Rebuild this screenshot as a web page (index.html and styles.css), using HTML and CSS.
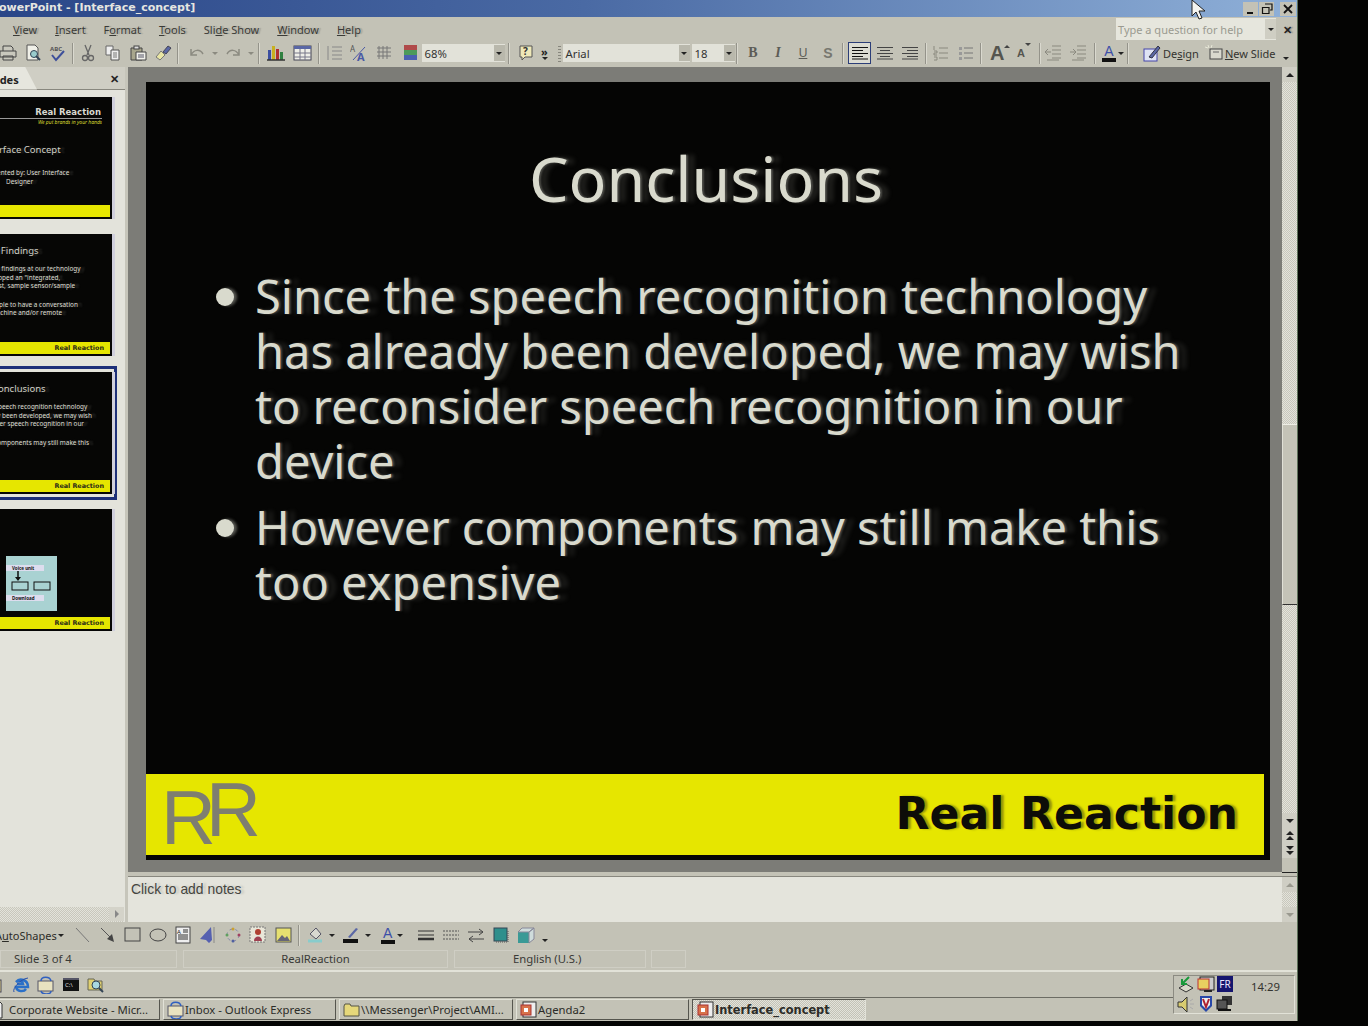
FILE: index.html
```html
<!DOCTYPE html>
<html lang="en">
<head>
    <meta charset="UTF-8">
    <title>PowerPoint - [Interface_concept]</title>
    <link rel="stylesheet" href="styles.css">
</head>
<body>
<div class="app">
    <div class="titlebar">
        <span class="title-text">PowerPoint - [Interface_concept]</span>
        <div class="win-btns">
            <span class="win-btn"><svg width="12" height="12" viewBox="0 0 12 12"><rect x="2" y="9" width="6" height="2" fill="#111"/></svg></span>
            <span class="win-btn"><svg width="12" height="12" viewBox="0 0 12 12"><path d="M4 1h7v6H9M1.500 4.500h6.500v6h-6.500z" fill="none" stroke="#111" stroke-width="1.200"/></svg></span>
            <span class="win-btn win-close"><svg width="12" height="12" viewBox="0 0 12 12"><path d="M2 2l8 8M10 2l-8 8" stroke="#111" stroke-width="1.800"/></svg></span>
        </div>
    </div>

    <div class="menubar">
        <span class="menu-item"><u>V</u>iew</span>
        <span class="menu-item"><u>I</u>nsert</span>
        <span class="menu-item">F<u>o</u>rmat</span>
        <span class="menu-item"><u>T</u>ools</span>
        <span class="menu-item">Sli<u>d</u>e Show</span>
        <span class="menu-item"><u>W</u>indow</span>
        <span class="menu-item"><u>H</u>elp</span>
        <div class="help-box">
            <span class="help-text">Type a question for help</span>
            <span class="help-arrow"></span>
        </div>
        <span class="menu-close">✕</span>
    </div>

    <div class="toolbar">
        <svg class="ico ico-first" width="18" height="18" viewBox="0 0 18 18"><path d="M4 7V2h8l2 2v3M1 7h16v6H1zM4 12h10v4H4z" fill="#c9c8bd" stroke="#444"/></svg>
        <svg class="ico" width="18" height="18" viewBox="0 0 18 18"><path d="M3 1h8l3 3v12H3z" fill="#f0f0e8" stroke="#555"/><circle cx="10" cy="10" r="3.500" fill="#9cc" stroke="#345"/><path d="M12 12l4 4" stroke="#345" stroke-width="2"/></svg>
        <svg class="ico" width="18" height="18" viewBox="0 0 18 18"><text x="1" y="7" class="ico-abc">ABC</text><path d="M3 11l4 5 8-9" fill="none" stroke="#3d4f9a" stroke-width="2"/></svg>
        <span class="sep"></span>
        <svg class="ico" width="18" height="18" viewBox="0 0 18 18"><path d="M6 1l4 10M12 1L8 11" stroke="#666" stroke-width="1.300"/><circle cx="6" cy="14" r="2.500" fill="none" stroke="#666" stroke-width="1.300"/><circle cx="12" cy="14" r="2.500" fill="none" stroke="#666" stroke-width="1.300"/></svg>
        <svg class="ico" width="18" height="18" viewBox="0 0 18 18"><path d="M2 2h7v9H2z" fill="#eee" stroke="#666"/><path d="M7 6h8v10H7z" fill="#eee" stroke="#555"/><path d="M9 9h4M9 11h4M9 13h4" stroke="#777"/></svg>
        <svg class="ico" width="18" height="18" viewBox="0 0 18 18"><path d="M2 4h11v12H2z" fill="#a8a68c" stroke="#444"/><rect x="5" y="2" width="5" height="3" fill="#ddd" stroke="#444"/><path d="M7 8h10v8H7z" fill="#f0f0ea" stroke="#444"/><path d="M9 11h6M9 13h6" stroke="#556"/></svg>
        <svg class="ico" width="18" height="18" viewBox="0 0 18 18"><path d="M2 13l5-6 4 4-5 5z" fill="#e9e6a4" stroke="#777"/><path d="M9 8l5-6 3 2-5 6z" fill="#5a67a5" stroke="#445"/></svg>
        <span class="sep"></span>
        <svg class="ico ico-undo" width="18" height="18" viewBox="0 0 18 18"><path d="M3 5v6h6M3 11c3-6 9-6 12-1" fill="none" stroke="#8b8a80" stroke-width="1.500"/></svg>
        <span class="arrow-sm arrow-wide"></span>
        <svg class="ico" width="18" height="18" viewBox="0 0 18 18"><path d="M15 5v6H9M15 11C12 5 6 5 3 10" fill="none" stroke="#8b8a80" stroke-width="1.500"/></svg>
        <span class="arrow-sm arrow-wide"></span>
        <span class="sep"></span>
        <svg class="ico ico-chart" width="20" height="18" viewBox="0 0 20 18"><rect x="2" y="6" width="3" height="10" fill="#3c4fa0"/><rect x="6" y="2" width="3" height="14" fill="#c8b020"/><rect x="10" y="5" width="3" height="11" fill="#b03030"/><rect x="14" y="8" width="3" height="8" fill="#308040"/><path d="M1 16h18" stroke="#333" stroke-width="1.500"/></svg>
        <svg class="ico" width="20" height="18" viewBox="0 0 20 18"><rect x="1" y="2" width="17" height="14" fill="#efefe8" stroke="#445"/><rect x="1" y="2" width="17" height="3" fill="#5a67a5"/><path d="M7 5v11M12 5v11M1 9h17M1 13h17" stroke="#778"/></svg>
        <span class="sep"></span>
        <svg class="ico" width="18" height="18" viewBox="0 0 18 18"><path d="M7 3h10M7 7h10M7 11h10M7 15h10" stroke="#888"/><path d="M3 2v14" stroke="#888"/></svg>
        <svg class="ico" width="18" height="18" viewBox="0 0 18 18"><text x="0" y="8" class="ico-a-sm">A</text><text x="7" y="17" class="ico-a-lg">A</text><path d="M3 16L15 3" stroke="#4a5aa5"/></svg>
        <svg class="ico" width="18" height="18" viewBox="0 0 18 18"><path d="M2 4h14M2 8h14M2 12h14M4 2v13M8 2v13M12 2v13" stroke="#777"/></svg>
        <svg class="ico ico-gray" width="16" height="18" viewBox="0 0 16 18"><rect x="1" y="1" width="13" height="5" fill="#b04a4a"/><rect x="1" y="6" width="13" height="5" fill="#4c9a5a"/><rect x="1" y="11" width="13" height="5" fill="#4a5fb0"/></svg>
        <div class="combo combo-zoom"><span class="combo-val">68%</span><span class="combo-btn"></span></div>
        <span class="sep sep-wide"></span>
        <svg class="ico" width="18" height="18" viewBox="0 0 18 18"><path d="M3 2h12v11H8l-3 3v-3H3z" fill="#eee8b8" stroke="#555"/><text x="6" y="11" class="ico-q">?</text></svg>
        <span class="more"><span class="more-top">»</span><span class="arrow-sm arrow-dark"></span></span>
        <span class="grip"></span>
        <div class="combo combo-font"><span class="combo-val">Arial</span><span class="combo-btn"></span></div>
        <div class="combo combo-size"><span class="combo-val">18</span><span class="combo-btn"></span></div>
        <span class="sep"></span>
        <span class="fmt fmt-b">B</span>
        <span class="fmt fmt-i">I</span>
        <span class="fmt fmt-u">U</span>
        <span class="fmt fmt-s">S</span>
        <span class="sep sep-align"></span>
        <span class="align-btn align-on"><svg width="18" height="14" viewBox="0 0 18 14"><path d="M1 1.500h16M1 4.500h11M1 7.500h16M1 10.500h11M1 13h16" stroke="#111"/></svg></span>
        <span class="align-btn"><svg width="18" height="14" viewBox="0 0 18 14"><path d="M1 1.500h16M4 4.500h10M1 7.500h16M4 10.500h10M1 13h16" stroke="#444"/></svg></span>
        <span class="align-btn"><svg width="18" height="14" viewBox="0 0 18 14"><path d="M1 1.500h16M6 4.500h11M1 7.500h16M6 10.500h11M1 13h16" stroke="#444"/></svg></span>
        <span class="sep"></span>
        <svg class="ico" width="18" height="18" viewBox="0 0 18 18"><path d="M7 4h9M7 9h9M7 14h9M2 2v4M2 7h3v2H2v2h3M2 13h3v3H2" fill="none" stroke="#8a897f"/></svg>
        <svg class="ico" width="18" height="18" viewBox="0 0 18 18"><path d="M7 4h9M7 9h9M7 14h9" stroke="#777"/><path d="M2 3h3v3H2zM2 8h3v3H2zM2 13h3v3H2z" fill="#999"/></svg>
        <span class="sep"></span>
        <span class="big-a"><span class="big-a-l">A</span><span class="tri-up"></span></span>
        <span class="big-a big-a-small"><span class="big-a-s">A</span><span class="tri-down"></span></span>
        <span class="sep sep-indent"></span>
        <svg class="ico" width="18" height="18" viewBox="0 0 18 18"><path d="M8 2h9M8 6h9M8 10h9M8 14h9M1 8h6M4 5L1 8l3 3M3 16h12" fill="none" stroke="#8a897f"/></svg>
        <svg class="ico" width="18" height="18" viewBox="0 0 18 18"><path d="M8 2h9M8 6h9M8 10h9M8 14h9M1 8h6M4 5l3 3-3 3M3 16h12" fill="none" stroke="#8a897f"/></svg>
        <span class="sep sep-color"></span>
        <span class="font-color"><span class="fc-a">A</span><span class="fc-bar"></span></span>
        <span class="arrow-sm arrow-dark"></span>
        <span class="sep"></span>
        <svg class="ico ico-design" width="18" height="18" viewBox="0 0 18 18"><rect x="1" y="5" width="13" height="12" fill="#dfe3f4" stroke="#44a"/><path d="M6 13L15 2l2 2-8 10z" fill="#5a67a5" stroke="#334"/></svg>
        <span class="tb-label">De<u>s</u>ign</span>
        <svg class="ico ico-new" width="18" height="18" viewBox="0 0 18 18"><path d="M3 1l1 3M0 3l3 1M7 1L6 4" stroke="#e8e8d8"/><rect x="5" y="5" width="12" height="10" fill="#d9d8ce" stroke="#444"/><path d="M8 8h6" stroke="#666"/></svg>
        <span class="tb-label"><u>N</u>ew Slide</span>
        <span class="arrow-sm arrow-dark arrow-end"></span>
    </div>

    <div class="workspace">
        <aside class="slides-panel">
            <div class="panel-tabs">
                <span class="panel-tab">Slides</span>
                <span class="panel-close">✕</span>
            </div>
            <div class="thumbs">
                <div class="thumb thumb-one">
                    <div class="t1-brand">Real Reaction</div>
                    <div class="t1-sub">We put brands in your hands</div>
                    <div class="t-title t1-title">Interface Concept</div>
                    <div class="t-line t1-by">Presented by: User Interface</div>
                    <div class="t-line t1-by2">Designer</div>
                    <div class="t-foot"></div>
                </div>
                <div class="thumb">
                    <div class="t-title t2-title">Interface Findings</div>
                    <div class="t-body t2-body">
                        <div class="t-line">Looking at our findings at our technology</div>
                        <div class="t-line">we have developed an "integrated,</div>
                        <div class="t-line">simple, low-cost, sample sensor/sample</div>
                        <div class="t-line t-gap">we expect people to have a conversation</div>
                        <div class="t-line">with coffee machine and/or remote</div>
                    </div>
                    <div class="t-foot">Real Reaction</div>
                </div>
                <div class="thumb-frame">
                    <div class="thumb">
                        <div class="t-title t3-title">Conclusions</div>
                        <div class="t-body t3-body">
                            <div class="t-line">Since the speech recognition technology</div>
                            <div class="t-line">has already been developed, we may wish</div>
                            <div class="t-line">to reconsider speech recognition in our</div>
                            <div class="t-line t-gap">However components may still make this</div>
                        </div>
                        <div class="t-foot">Real Reaction</div>
                    </div>
                </div>
                <div class="thumb">
                    <div class="t4-diagram">
                        <span class="t4-label">Voice unit</span>
                        <svg class="t4-svg" width="52" height="22" viewBox="0 0 52 22"><path d="M12 0v8" stroke="#111" stroke-width="1.500"/><path d="M9 6h6l-3 4z" fill="#111"/><rect x="6" y="11" width="16" height="8" fill="none" stroke="#111"/><rect x="28" y="11" width="16" height="8" fill="none" stroke="#111"/></svg>
                        <span class="t4-label t4-label-low">Download</span>
                    </div>
                    <div class="t-foot">Real Reaction</div>
                </div>
            </div>
            <div class="panel-scroll"><span class="panel-scroll-btn"></span></div>
        </aside>

        <div class="center">
            <div class="stage">
                <div class="slide">
                    <h1 class="slide-title">Conclusions</h1>
                    <ul class="slide-list">
                        <li>Since the speech recognition technology has already been developed, we may wish to reconsider speech recognition in our device</li>
                        <li>However components may still make this too expensive</li>
                    </ul>
                    <div class="slide-foot">
                        <span class="logo"><span class="logo-r1">R</span><span class="logo-r2">R</span></span>
                        <span class="brand">Real Reaction</span>
                    </div>
                </div>
            </div>
            <div class="notes">Click to add notes</div>
        </div>

        <div class="vscroll">
            <div class="vs-main">
                <span class="vs-btn"><span class="tri-up-sb"></span></span>
                <span class="vs-track"></span>
                <span class="vs-thumb"></span>
                <span class="vs-track vs-track-low"></span>
                <span class="vs-btn"><span class="tri-dn-sb"></span></span>
                <span class="vs-page"><span class="tri-up-sb"></span><span class="tri-up-sb"></span></span>
                <span class="vs-page"><span class="tri-dn-sb"></span><span class="tri-dn-sb"></span></span>
            </div>
            <div class="vs-notes">
                <span class="vs-btn"><span class="tri-up-sb tri-gray"></span></span>
                <span class="vs-track"></span>
                <span class="vs-btn"><span class="tri-dn-sb tri-gray"></span></span>
            </div>
        </div>
    </div>

    <div class="drawbar">
        <span class="autoshapes">A<u>u</u>toShapes</span>
        <span class="arrow-sm arrow-dark"></span>
        <svg class="ico dr-first" width="18" height="18" viewBox="0 0 18 18"><path d="M2 2l13 14" stroke="#777"/></svg>
        <svg class="ico" width="18" height="18" viewBox="0 0 18 18"><path d="M2 2l11 11" stroke="#555"/><path d="M15 16l-7-3 5-5z" fill="#444"/></svg>
        <svg class="ico" width="18" height="18" viewBox="0 0 18 18"><rect x="1" y="2" width="15" height="13" fill="none" stroke="#444"/></svg>
        <svg class="ico" width="18" height="18" viewBox="0 0 18 18"><ellipse cx="9" cy="9" rx="8" ry="6" fill="none" stroke="#444"/></svg>
        <svg class="ico" width="18" height="18" viewBox="0 0 18 18"><rect x="2" y="1" width="14" height="16" fill="#eee" stroke="#444"/><path d="M9 4h5M9 6h5M4 9h10M4 11h10M4 13h10" stroke="#333"/><text x="3" y="8" class="ico-a-xs">A</text></svg>
        <svg class="ico" width="18" height="18" viewBox="0 0 18 18"><path d="M12 1L1 13l6 1 3 3 3-3z" fill="#5560b0"/><path d="M15 1v16" stroke="#888"/></svg>
        <svg class="ico" width="18" height="18" viewBox="0 0 18 18"><circle cx="9" cy="9" r="6" fill="none" stroke="#8888a8" stroke-dasharray="3 3"/><circle cx="9" cy="3" r="1.500" fill="#c9a030"/><circle cx="15" cy="9" r="1.500" fill="#a04060"/><circle cx="9" cy="15" r="1.500" fill="#5060a0"/><circle cx="3" cy="9" r="1.500" fill="#60a060"/></svg>
        <svg class="ico" width="18" height="18" viewBox="0 0 18 18"><rect x="1" y="1" width="15" height="15" fill="#e8e6d8" stroke="#777" stroke-dasharray="2 1"/><circle cx="9" cy="6" r="3" fill="#b04030"/><path d="M5 15c0-6 8-6 8 0z" fill="#a04050"/></svg>
        <svg class="ico ico-pic" width="18" height="18" viewBox="0 0 18 18"><rect x="1" y="2" width="15" height="14" fill="#e6e070" stroke="#555"/><path d="M2 15l5-6 3 3 2-2 3 5z" fill="#667"/></svg>
        <span class="sep"></span>
        <svg class="ico ico-fill" width="18" height="18" viewBox="0 0 18 18"><path d="M3 8l6-6 5 6-5 5z" fill="#d8d8d0" stroke="#556"/><path d="M1 15h14" stroke="#8cc" stroke-width="3"/></svg>
        <span class="arrow-sm arrow-dark"></span>
        <svg class="ico ico-line" width="18" height="18" viewBox="0 0 18 18"><path d="M6 11L14 2l2 1-8 9z" fill="#5a67a5"/><rect x="1" y="13" width="15" height="4" fill="#111"/></svg>
        <span class="arrow-sm arrow-dark"></span>
        <span class="font-color fc-draw"><span class="fc-a">A</span><span class="fc-bar"></span></span>
        <span class="arrow-sm arrow-dark"></span>
        <svg class="ico ico-weight" width="18" height="18" viewBox="0 0 18 18"><path d="M1 5h16M1 9h16" stroke="#333"/><path d="M1 13h16" stroke="#333" stroke-width="2.500"/></svg>
        <svg class="ico" width="18" height="18" viewBox="0 0 18 18"><path d="M1 5h16M1 9h16M1 13h16" stroke="#555" stroke-dasharray="2 1"/></svg>
        <svg class="ico" width="18" height="18" viewBox="0 0 18 18"><path d="M1 6h15M12 3l4 3-4 3M17 13H2M6 10l-4 3 4 3" fill="none" stroke="#444"/></svg>
        <svg class="ico" width="18" height="18" viewBox="0 0 18 18"><rect x="2" y="2" width="13" height="13" fill="#2f8f8c" stroke="#345"/><path d="M4 16h12V4" fill="none" stroke="#555" stroke-dasharray="1 1"/></svg>
        <svg class="ico" width="18" height="18" viewBox="0 0 18 18"><path d="M1 6h11v11H1z" fill="#3a9a96"/><path d="M1 6l4-4h12l-5 4zM12 6l5-4v11l-5 4z" fill="#cfdcdc" stroke="#889"/></svg>
        <span class="arrow-sm arrow-dark arrow-end-draw"></span>
    </div>

    <div class="statusbar">
        <span class="st-cell st-slide">Slide 3 of 4</span>
        <span class="st-cell st-design">RealReaction</span>
        <span class="st-cell st-lang">English (U.S.)</span>
        <span class="st-cell st-b"></span>
    </div>

    <div class="taskbar">
        <div class="task-main">
            <div class="quicklaunch">
                <svg class="ico ql-first" width="18" height="18" viewBox="0 0 18 18"><rect x="2" y="4" width="12" height="12" fill="#e8d890" stroke="#445"/></svg>
                <svg class="ico" width="18" height="18" viewBox="0 0 18 18"><path d="M14 13c-2 3-9 3-10-2h12C16 4 8 1 4 6c2-2 6-2 7 2H5" fill="none" stroke="#2a70c8" stroke-width="2.500"/><path d="M2 16C0 13 8 3 16 2" fill="none" stroke="#2a50a8"/></svg>
                <svg class="ico" width="18" height="18" viewBox="0 0 18 18"><rect x="1" y="5" width="15" height="10" fill="#e8e2c0" stroke="#556"/><path d="M4 5c0-5 9-5 10 0M14 15c0 4-9 4-10 0" fill="none" stroke="#3060c0" stroke-width="1.500"/></svg>
                <svg class="ico" width="18" height="18" viewBox="0 0 18 18"><rect x="1" y="2" width="16" height="13" fill="#111"/><rect x="1" y="2" width="16" height="2" fill="#556"/><text x="3" y="11" class="ico-cmd">C:\</text></svg>
                <svg class="ico" width="18" height="18" viewBox="0 0 18 18"><path d="M1 3h6l1 2h7v9H1z" fill="#e0d070" stroke="#665"/><circle cx="9" cy="9" r="4" fill="#a8d8e0" stroke="#345"/><path d="M12 12l4 4" stroke="#345" stroke-width="2"/></svg>
            </div>
            <div class="tasks">
                <span class="task task-web"><svg class="task-ico" width="14" height="18" viewBox="0 0 14 18"><path d="M-6 1h12l2 2v14h-14z" fill="#eee" stroke="#333"/></svg>Corporate Website - Micr...</span>
                <span class="task task-mail"><svg class="task-ico" width="17" height="18" viewBox="0 0 17 18"><rect x="1" y="5" width="15" height="10" fill="#e8e2c0" stroke="#556"/><path d="M4 5c0-5 9-5 10 0M14 15c0 4-9 4-10 0" fill="none" stroke="#3060c0" stroke-width="1.500"/></svg>Inbox - Outlook Express</span>
                <span class="task task-folder"><svg class="task-ico" width="17" height="18" viewBox="0 0 17 18"><path d="M1 5l1-2h5l1 2h8v10H1z" fill="#e6d87a" stroke="#554"/></svg>\\Messenger\Project\AMI...</span>
                <span class="task task-agenda"><svg class="task-ico" width="17" height="18" viewBox="0 0 17 18"><rect x="3" y="1" width="13" height="15" fill="#eee" stroke="#333"/><rect x="1" y="4" width="10" height="10" fill="#d8724a" stroke="#a33"/><rect x="4" y="7" width="4" height="4" fill="#fff"/></svg>Agenda2</span>
                <span class="task task-active"><svg class="task-ico" width="17" height="18" viewBox="0 0 17 18"><rect x="3" y="1" width="13" height="15" fill="#eee" stroke="#333"/><rect x="1" y="4" width="10" height="10" fill="#d8724a" stroke="#a33"/><rect x="4" y="7" width="4" height="4" fill="#fff"/></svg>Interface_concept</span>
            </div>
        </div>
        <div class="tray">
            <div class="tray-icons">
                <svg width="18" height="18" viewBox="0 0 18 18"><path d="M2 12l7-4 7 4-7 4z" fill="#d8d8c8" stroke="#333"/><path d="M12 1L5 8M5 3v5h5" fill="none" stroke="#1a9a3a" stroke-width="2"/></svg>
                <svg width="18" height="18" viewBox="0 0 18 18"><rect x="3" y="1" width="14" height="13" fill="#ccc" stroke="#222"/><rect x="1" y="3" width="11" height="10" fill="#e8d060" stroke="#b33"/><path d="M7 15h8" stroke="#222" stroke-width="2"/></svg>
                <span class="lang">FR</span>
                <svg width="18" height="18" viewBox="0 0 18 18"><path d="M1 7h4l5-5v15l-5-5H1z" fill="#d8cc70" stroke="#333"/><path d="M13 6l3-2M13 9h4M13 12l3 2" stroke="#aaa"/></svg>
                <svg width="18" height="18" viewBox="0 0 18 18"><path d="M3 1h12v10l-6 6-6-6z" fill="#2848a8"/><path d="M5 3h8v7l-4 4-4-4z" fill="#eee"/><path d="M6 4l3 8 3-8" fill="none" stroke="#b02030" stroke-width="2"/></svg>
                <svg width="18" height="18" viewBox="0 0 18 18"><rect x="6" y="1" width="10" height="9" fill="#333"/><rect x="1" y="5" width="10" height="9" fill="#555" stroke="#111"/><path d="M2 15h13" stroke="#111" stroke-width="2"/></svg>
            </div>
            <span class="clock">14:29</span>
        </div>
    </div>
</div>
<svg class="cursor" width="18" height="22" viewBox="0 0 18 22"><path d="M1 0v16l4-4 3 7 3-1-3-7h6z" fill="#f4f4f0" stroke="#222"/></svg>
</body>
</html>
```

FILE: styles.css
```css
* {
    box-sizing: border-box;
}

html, body {
    margin: 0;
    padding: 0;
    background: #040403;
}

body {
    position: relative;
    width: 1368px;
    height: 1026px;
    overflow: hidden;
    font-family: "Noto Sans", "Liberation Sans", sans-serif;
    font-size: 11.300px;
    color: #2c2c28;
}

.app {
    width: 1298px;
    height: 1021px;
    background: #c3c2b6;
    display: flex;
    flex-direction: column;
    overflow: hidden;
    border-right: 1px solid #5c7058;
}

.cursor {
    position: absolute;
    left: 1191px;
    top: 0;
}

/* title bar */
.titlebar {
    height: 17px;
    flex: none;
    display: flex;
    align-items: center;
    justify-content: space-between;
    background: linear-gradient(90deg, #2a4688 0%, #4a6aa4 45%, #8fb0d8 100%);
}

.title-text {
    margin: -3px 0 0 -9px;
    color: #e6e6e0;
    font-family: "DejaVu Sans", sans-serif;
    font-weight: 700;
    font-size: 11px;
}

.win-btns {
    display: flex;
    gap: 1px;
    margin-right: 1px;
}

.win-btn {
    width: 15px;
    height: 14px;
    background: #c3c2b6;
    display: flex;
    align-items: center;
    justify-content: center;
}

.win-close {
    margin-left: 5px;
    width: 16px;
}

/* menu */
.menubar {
    height: 26px;
    flex: none;
    display: flex;
    align-items: center;
    padding: 0 5px 2px 13px;
    gap: 18px;
    font-size: 11px;
    color: #3a3a36;
    text-shadow: 2px 0 1px rgba(60, 60, 55, .25);
}

.help-box {
    margin: 0 -8px 0 auto;
    width: 160px;
    height: 22px;
    background: #e6e6dd;
    color: #9a9a90;
    display: flex;
    align-items: center;
    justify-content: space-between;
    padding-left: 2px;
    text-shadow: none;
}

.help-arrow {
    width: 11px;
    height: 20px;
    background: #cfcec3;
    position: relative;
}

.help-arrow::after,
.combo-btn::after {
    content: "";
    position: absolute;
    left: 50%;
    top: 50%;
    margin: -1px 0 0 -3px;
    border: 3px solid transparent;
    border-top: 3px solid #222;
    border-bottom: 0;
}

.menu-close {
    margin-left: -3px;
    font-size: 11px;
    font-weight: 700;
    color: #222;
}

/* toolbar */
.toolbar {
    height: 24px;
    flex: none;
    display: flex;
    align-items: center;
    padding-right: 3px;
    overflow: hidden;
    margin-top: -2px;
    margin-bottom: 2px;
}

.ico {
    flex: none;
    margin: 0 3.500px;
}

.ico-first {
    margin-left: -1px;
}

.ico-undo {
    margin-left: 7px;
}

.ico-chart {
    margin-left: 5px;
}

.ico-gray {
    margin-left: 6px;
    margin-right: 3px;
}

.ico-abc {
    font-size: 6px;
    font-weight: 700;
    fill: #555;
}

.ico-a-sm {
    font-size: 8px;
    fill: #555;
}

.ico-a-lg {
    font-size: 11px;
    font-weight: 700;
    fill: #4a5aa5;
}

.ico-a-xs {
    font-size: 6px;
    fill: #222;
}

.ico-q {
    font-size: 10px;
    font-weight: 700;
    fill: #333;
}

.ico-cmd {
    font-size: 6px;
    fill: #ddd;
}

.sep {
    flex: none;
    width: 1px;
    height: 21px;
    background: #94938a;
    border-right: 1px solid #dad9cf;
    margin: 0 1.500px;
    box-sizing: content-box;
}

.sep-wide {
    margin: 0 3.500px;
}

.sep-align {
    margin-right: 4px;
}

.sep-indent {
    margin-right: 0;
}

.sep-color {
    margin-left: 3px;
}

.arrow-sm {
    flex: none;
    width: 0;
    height: 0;
    border: 3px solid transparent;
    border-top: 3px solid #8b8a80;
    border-bottom: 0;
    margin: 0 1px;
}

.arrow-wide {
    margin: 0 2.500px;
}

.arrow-dark {
    border-top-color: #222;
}

.arrow-end {
    margin-left: 8px;
    margin-top: 10px;
}

.combo {
    flex: none;
    height: 18px;
    background: #e2e2d9;
    display: flex;
    align-items: center;
    justify-content: space-between;
    padding-left: 3px;
    color: #333;
}

.combo-btn {
    width: 11px;
    height: 16px;
    background: #b9b8ac;
    position: relative;
}

.combo-zoom {
    width: 83px;
}

.combo-font {
    width: 127px;
}

.combo-size {
    width: 43px;
    margin-left: 2px;
}

.more {
    flex: none;
    width: 12px;
    display: flex;
    flex-direction: column;
    align-items: center;
    line-height: 9px;
    font-size: 11px;
    font-weight: 700;
    color: #222;
}

.more-top {
    height: 10px;
}

.grip {
    flex: none;
    width: 3px;
    height: 18px;
    margin: 0 2px 0 7px;
    background: repeating-linear-gradient(0deg, #87867d 0 1px, transparent 1px 3px);
}

.fmt {
    flex: none;
    width: 25px;
    text-align: center;
    font-family: "Liberation Serif", serif;
    font-size: 14px;
    font-weight: 700;
    color: #5c5c56;
}

.fmt-b {
    margin-left: 1px;
}

.fmt-i {
    font-style: italic;
}

.fmt-u {
    font-family: "Liberation Sans", sans-serif;
    font-size: 12px;
    text-decoration: underline;
    font-weight: 400;
}

.fmt-s {
    font-family: "Liberation Sans", sans-serif;
    color: #77776f;
}

.align-btn {
    flex: none;
    width: 23px;
    height: 22px;
    display: flex;
    align-items: center;
    justify-content: center;
    margin-right: 2px;
}

.align-on {
    background: #dcdcd3;
    border: 1px solid #2c3e78;
}

.big-a {
    flex: none;
    width: 25px;
    margin-left: 7px;
    display: flex;
    align-items: flex-start;
    color: #55554f;
    font-family: "Liberation Sans", sans-serif;
    font-weight: 700;
    line-height: 20px;
}

.big-a-l {
    font-size: 20px;
}

.big-a-s {
    font-size: 11px;
    line-height: 24px;
}

.big-a-small {
    width: 20px;
    margin-left: 2px;
}

.tri-up,
.tri-down {
    width: 0;
    height: 0;
    border: 3px solid transparent;
    margin-top: 2px;
}

.tri-up {
    border-top: 0;
    border-bottom: 3px solid #444;
}

.tri-down {
    border-bottom: 0;
    border-top: 3px solid #444;
}

.font-color {
    flex: none;
    width: 16px;
    margin-left: 4px;
    display: flex;
    flex-direction: column;
    align-items: center;
}

.fc-a {
    font-family: "Liberation Sans", sans-serif;
    font-size: 14px;
    line-height: 13px;
    color: #3c4fa8;
}

.fc-bar {
    width: 14px;
    height: 4px;
    background: #111;
}

.tb-label {
    flex: none;
    font-size: 11px;
    color: #33332f;
}

.ico-design {
    margin-left: 13px;
    margin-right: 2px;
}

.ico-new {
    margin-left: 6px;
    margin-right: 2px;
}

/* workspace */
.workspace {
    height: 855px;
    flex: none;
    display: flex;
}

.slides-panel {
    width: 128px;
    flex: none;
    background: #e3e3db;
    display: flex;
    flex-direction: column;
    border-right: 3px solid #c6c5ba;
    overflow: hidden;
}

.panel-tabs {
    height: 23px;
    flex: none;
    background: #cfcec4;
    display: flex;
    align-items: center;
    justify-content: space-between;
    padding-right: 6px;
    border-bottom: 1px solid #88877e;
}

.panel-tab {
    margin-left: -13px;
    height: 23px;
    width: 50px;
    padding: 5px 0 0 0;
    background: #e6e6de;
    font-weight: 700;
    font-size: 11px;
    color: #222;
    clip-path: polygon(0 0, 38px 0, 100% 100%, 0 100%);
}

.panel-close {
    font-size: 11px;
    font-weight: 700;
    color: #222;
}

.thumbs {
    flex: 1;
    padding-top: 7px;
    display: flex;
    flex-direction: column;
    align-items: flex-end;
    padding-right: 13px;
    overflow: hidden;
}

.thumb {
    width: 168px;
    height: 122px;
    flex: none;
    background: #060605;
    border-right: 2px solid #060605;
    box-shadow: 3px 0 0 #d0cfdc;
    color: #ddddd2;
    display: flex;
    flex-direction: column;
    margin-bottom: 15px;
    position: relative;
    overflow: hidden;
    font-size: 6.400px;
}

.thumb-frame {
    flex: none;
    border: 3px solid #1d2f78;
    padding: 3px 2px;
    background: #e3e3db;
    margin: -5px -5px 9px 0;
}

.thumb-frame .thumb {
    margin: 0;
}

.t1-brand {
    text-align: right;
    padding: 10px 9px 0 0;
    font-family: "DejaVu Sans", sans-serif;
    font-weight: 700;
    font-size: 8.500px;
    color: #d8d8d0;
}

.t1-sub {
    border-top: 1px solid #999;
    margin: 1px 8px 0 0;
    text-align: right;
    font-size: 5px;
    font-style: italic;
    color: #d8d830;
}

.t-title {
    font-size: 9.500px;
    padding: 10px 0 0 57px;
    color: #cfcfc5;
    white-space: nowrap;
    text-shadow: 4px 0 2px rgba(200, 200, 190, .2);
}

.t1-title {
    padding: 18px 0 0 37px;
}

.t2-title {
    padding-left: 14px;
}

.t3-title {
    padding-left: 48px;
}

.t-body {
    padding: 8px 0 0 18px;
    text-align: left;
}

.t2-body {
    padding-left: 12px;
}

.t3-body {
    padding-left: 22px;
}

.t-line {
    white-space: nowrap;
    line-height: 8.500px;
    text-shadow: 4px 0 2px rgba(200, 200, 190, .25);
}

.t-gap {
    margin-top: 10px;
}

.t1-by {
    padding: 13px 0 0 40px;
}

.t1-by2 {
    padding-left: 62px;
}

.t-foot {
    margin-top: auto;
    margin-bottom: 2px;
    height: 12px;
    background: #e6e600;
    color: #2a2a18;
    text-align: right;
    padding-right: 6px;
    font-family: "DejaVu Sans", sans-serif;
    font-weight: 700;
    font-size: 6.400px;
    line-height: 12px;
    white-space: nowrap;
}

.t4-diagram {
    margin: 47px 0 0 62px;
    width: 51px;
    height: 55px;
    background: #a9d2d2;
    color: #111;
    font-size: 4.500px;
    font-weight: 700;
    padding-top: 9px;
    display: flex;
    flex-direction: column;
}

.t4-label {
    padding-left: 6px;
    line-height: 6px;
    background: #dde;
    width: 38px;
}

.t4-label-low {
    margin-top: 2px;
}

.t4-svg {
    flex: none;
}

.panel-scroll {
    height: 15px;
    flex: none;
    margin-right: 2px;
    background: repeating-conic-gradient(#e3e3db 0 25%, #c8c7bc 0 50%) 0 0 / 2px 2px;
    display: flex;
    justify-content: flex-end;
}

.panel-scroll-btn {
    width: 15px;
    height: 14px;
    background: #d4d3c9;
    position: relative;
    margin-right: -1px;
}

.panel-scroll-btn::after {
    content: "";
    position: absolute;
    left: 6px;
    top: 3px;
    border: 4px solid transparent;
    border-left: 4px solid #888;
    border-right: 0;
}

/* slide */
.center {
    flex: 1;
    min-width: 0;
    display: flex;
    flex-direction: column;
}

.stage {
    height: 809px;
    flex: none;
    background: #7c7c77;
    padding: 15px 0 0 18px;
    border-bottom: 3px solid #c3c2b6;
    box-shadow: inset 0 -1px 0 #c3c2b6;
}

.slide {
    width: 1124px;
    height: 778px;
    background: #050504;
    display: flex;
    flex-direction: column;
    color: #d9dacd;
    font-family: "Noto Sans", "Liberation Sans", sans-serif;
}

.slide-title {
    margin: 60px 0 0;
    text-align: center;
    font-weight: 400;
    font-size: 62.700px;
    line-height: 72px;
    padding-right: 4px;
    text-shadow: 2px 0 2px rgba(170, 170, 160, .4), 8px 0 5px rgba(170, 170, 160, .18);
}

.slide-list {
    list-style: none;
    margin: 55px 0 0;
    padding: 0 60px 0 109px;
    font-size: 47px;
    line-height: 55px;
    text-shadow: 2px 0 2px rgba(170, 170, 160, .4), 9px 0 5px rgba(170, 170, 160, .16);
}

.slide-list li {
    position: relative;
    margin-bottom: 11px;
}

.slide-list li::before {
    content: "";
    position: absolute;
    left: -39px;
    top: 19px;
    width: 18px;
    height: 18px;
    border-radius: 50%;
    background: #d9dacd;
    box-shadow: 3px 0 3px rgba(170, 170, 160, .5);
}

.slide-foot {
    margin-top: auto;
    margin-bottom: 5px;
    margin-right: 6px;
    height: 81px;
    background: #e6e600;
    display: flex;
    align-items: center;
    justify-content: space-between;
    padding: 0 26px 0 15px;
}

.logo {
    display: flex;
    color: #7e7e70;
    font-family: "Liberation Sans", sans-serif;
    font-size: 76px;
    line-height: 76px;
    align-items: flex-start;
}

.logo-r1 {
    margin-top: 7px;
}

.logo-r2 {
    margin-left: -10px;
    margin-top: -1px;
}

.brand {
    margin-top: -2px;
    color: #0d0d08;
    font-family: "DejaVu Sans", sans-serif;
    font-weight: 700;
    font-size: 44.200px;
    text-shadow: 3px 0 2px rgba(70, 70, 20, .5);
}

.notes {
    flex: 1;
    background: #e4e4dc;
    padding: 4px 0 0 3px;
    font-size: 13.900px;
    color: #45453f;
    border-top: 1px solid #88877e;
    font-family: "Liberation Sans", sans-serif;
    text-shadow: 3px 0 2px rgba(80, 80, 70, .2);
}

/* right scrollbar */
.vscroll {
    width: 15px;
    flex: none;
    display: flex;
    flex-direction: column;
    background: #c3c2b6;
}

.vs-main {
    height: 806px;
    flex: none;
    display: flex;
    flex-direction: column;
    border-bottom: 1px solid #222;
}

.vs-notes {
    flex: 1;
    display: flex;
    flex-direction: column;
    margin-top: 3px;
    border-top: 1px solid #88877e;
    background: #d4d3c9;
}

.vs-btn {
    height: 15px;
    flex: none;
    background: #cfcec4;
    display: flex;
    align-items: center;
    justify-content: center;
}

.vs-track {
    height: 342px;
    flex: none;
    background: repeating-conic-gradient(#e3e3db 0 25%, #c8c7bc 0 50%) 0 0 / 2px 2px;
}

.vs-track-low {
    height: 208px;
}

.vs-notes .vs-track {
    flex: 1;
    height: auto;
}

.vs-thumb {
    height: 181px;
    flex: none;
    background: #c4c3b7;
    border-top: 1px solid #eeeee6;
    border-left: 1px solid #e0e0d6;
    border-bottom: 1px solid #333;
}

.vs-page {
    height: 15px;
    flex: none;
    background: #cfcec4;
    display: flex;
    flex-direction: column;
    align-items: center;
    justify-content: center;
    gap: 1px;
}

.tri-up-sb,
.tri-dn-sb {
    width: 0;
    height: 0;
    border: 4px solid transparent;
}

.tri-up-sb {
    border-top: 0;
    border-bottom: 4px solid #222;
}

.tri-dn-sb {
    border-bottom: 0;
    border-top: 4px solid #222;
}

.tri-gray.tri-up-sb {
    border-bottom-color: #9a998f;
}

.tri-gray.tri-dn-sb {
    border-top-color: #9a998f;
}

/* bottom bars */
.drawbar {
    height: 26px;
    flex: none;
    display: flex;
    align-items: center;
}

.autoshapes {
    margin-left: -5px;
    flex: none;
    font-size: 11px;
}

.dr-first {
    margin-left: 9px;
}

.ico-pic {
    margin-left: 5px;
}

.ico-fill {
    margin-left: 5px;
}

.ico-line {
    margin-left: 6px;
}

.fc-draw {
    margin-left: 8px;
}

.ico-weight {
    margin-left: 13px;
}

.arrow-end-draw {
    margin-left: 4px;
    margin-top: 10px;
}

.statusbar {
    height: 24px;
    flex: none;
    display: flex;
    align-items: center;
    border-bottom: 2px solid #e2e2d8;
    padding-bottom: 1px;
}

.st-cell {
    flex: none;
    height: 18px;
    border: 1px solid #cfcec4;
    line-height: 15px;
    color: #3a3a36;
    margin-right: 6px;
}

.st-slide {
    width: 177px;
    padding-left: 13px;
}

.st-design {
    width: 265px;
    text-align: center;
}

.st-lang {
    width: 192px;
    padding-left: 58px;
    margin-right: 5px;
}

.st-b {
    width: 35px;
}

.taskbar {
    flex: 1;
    display: flex;
    background: #c3c2b6;
    padding-right: 2px;
}

.task-main {
    flex: 1;
    display: flex;
    flex-direction: column;
    min-width: 0;
}

.quicklaunch {
    height: 26px;
    flex: none;
    display: flex;
    align-items: center;
    border-bottom: 1px solid #6c6c64;
    padding-left: 2px;
}

.ql-first {
    margin-left: -15px;
}

.tasks {
    flex: 1;
    display: flex;
    gap: 3px;
    margin-top: 1px;
    margin-bottom: 2px;
}

.task {
    flex: none;
    height: 21px;
    display: flex;
    align-items: center;
    background: #c3c2b6;
    border-right: 1px solid #55554e;
    border-bottom: 1px solid #55554e;
    border-left: 1px solid #e2e2d8;
    border-top: 1px solid #e2e2d8;
    color: #2c2c28;
    white-space: nowrap;
}

.task-ico {
    flex: none;
    margin-right: 1px;
}

.task-web {
    width: 167px;
    margin-left: -7px;
    padding-left: 0;
    overflow: hidden;
}

.task-mail {
    width: 173px;
    padding-left: 3px;
}

.task-folder {
    width: 174px;
    padding-left: 3px;
}

.task-agenda {
    width: 173px;
    padding-left: 3px;
}

.task-active {
    width: 174px;
    padding-left: 4px;
    font-family: "DejaVu Sans", sans-serif;
    font-weight: 700;
    font-size: 11.400px;
    border-right-color: #e2e2d8;
    border-bottom-color: #e2e2d8;
    border-left-color: #55554e;
    border-top-color: #55554e;
    background: repeating-conic-gradient(#e3e3db 0 25%, #c3c2b6 0 50%) 0 0 / 2px 2px;
}

.tray {
    width: 122px;
    flex: none;
    height: 39px;
    margin-top: 3px;
    border: 1px solid #8c8b82;
    border-right-color: #e2e2d8;
    border-bottom-color: #e2e2d8;
    display: flex;
    align-items: center;
    padding-left: 2px;
}

.tray-icons {
    width: 60px;
    display: grid;
    grid-template-columns: 20px 20px 18px;
    gap: 1px 0;
    justify-items: center;
}

.lang {
    width: 16px;
    height: 16px;
    background: #15156e;
    color: #e8e8ff;
    font-size: 10px;
    line-height: 16px;
    text-align: center;
}

.clock {
    margin-left: 15px;
    margin-top: -17px;
    color: #33332f;
}
```
